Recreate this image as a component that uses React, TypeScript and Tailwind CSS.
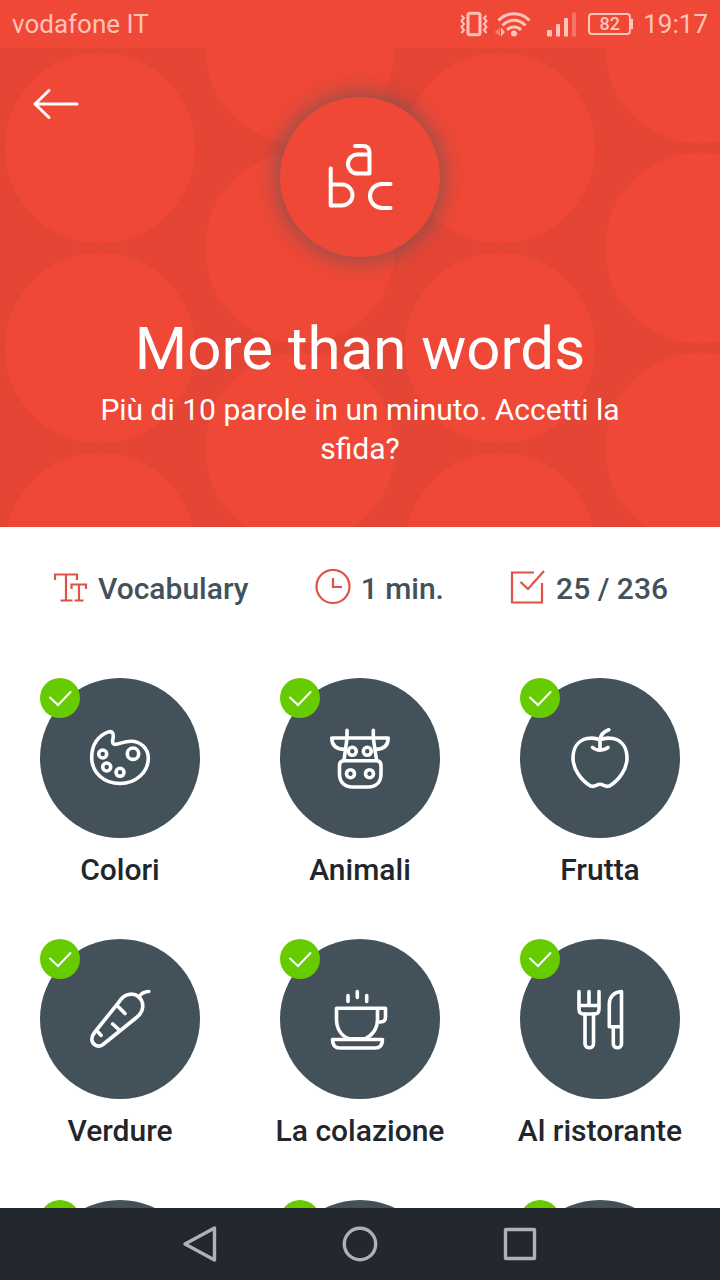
import React from "react"

export default () => {
  return (
    <div className="flex flex-col h-screen overflow-hidden bg-white font-['Roboto',sans-serif]">
      <StatusBar />
      <main className="flex flex-col grow min-h-0 overflow-hidden">
        <Hero />
        <Stats />
        <Topics />
      </main>
      <NavBar />
    </div>
  );
}

const StatusBar = () => (
  <div className="flex shrink-0 items-center justify-between h-12 px-3 bg-[#f04836] text-[#ffc3b9] text-[26px]">
    <span>vodafone IT</span>
    <div className="flex items-center">
      <svg className="w-[116px] h-12" viewBox="460 0 116 48" fill="none" stroke="currentColor">
        <rect x="468" y="13.3" width="12" height="21.4" rx="2" strokeWidth="3" />
        <path d="M461.5 15.5l2.5 2.5-2.5 3 2.5 3-2.5 3 2.5 3-2.5 3M486.5 15.5l-2.5 2.5 2.5 3-2.5 3 2.5 3-2.5 3 2.5 3" strokeWidth="2" />
        <path d="M498.5 20.5C507 11.5 521 11.5 529.5 20.5M502.5 25.5C509 18.5 519 18.5 525.5 25.5M507 29.8C511 26 517 26 521 29.8" strokeWidth="3" />
        <circle cx="514" cy="33.6" r="3" fill="currentColor" stroke="none" />
        <path d="M494.5 32l5.5-4v8z" fill="currentColor" stroke="none" opacity=".45" />
        <path d="M505 32l-4-4.5v9z" fill="currentColor" stroke="none" />
        <g fill="currentColor" stroke="none">
          <rect x="547" y="30" width="5" height="6.5" rx="1" />
          <rect x="556" y="24" width="4" height="12.5" rx="1" />
          <rect x="564" y="18" width="4" height="18.5" rx="1" />
          <rect x="572" y="12.5" width="4" height="24" opacity=".35" />
        </g>
      </svg>
      <div className="flex items-center ml-3 mr-2.5">
        <span className="flex items-center justify-center w-[43px] h-[22px] border-2 border-current rounded-[4px] text-[18px] leading-none font-medium">82</span>
        <span className="w-0.5 h-2.5 bg-current" />
      </div>
      <span>19:17</span>
    </div>
  </div>
)

const Hero = () => (
  <header className="relative shrink-0 bg-[#e54534] text-white">
    <svg className="absolute inset-0 w-full h-full" aria-hidden="true">
      <defs>
        <pattern id="dots" width="400" height="200" patternUnits="userSpaceOnUse">
          <g fill="#f04836">
            <circle cx="100" cy="100" r="95" />
            <circle cx="300" cy="0" r="95" />
            <circle cx="300" cy="200" r="95" />
          </g>
        </pattern>
      </defs>
      <rect width="100%" height="100%" fill="url(#dots)" />
    </svg>
    <button className="absolute left-8 top-10 flex" aria-label="Indietro">
      <svg className="w-12 h-8" viewBox="0 0 48 32" fill="none" stroke="currentColor" strokeWidth="3" strokeLinecap="round" strokeLinejoin="round">
        <path d="M45 16H3M17 2.5L3 16l14 13.5" />
      </svg>
    </button>
    <div className="relative flex flex-col items-center px-16 pt-[49px] pb-[59px] text-center">
      <div className="flex items-center justify-center size-40 rounded-full bg-[#f04836] shadow-[0_0_24px_1px_rgba(84,88,90,0.8)]">
        <svg className="size-[68px]" viewBox="0 0 68 68" fill="none" stroke="currentColor" strokeWidth="4" strokeLinecap="round" strokeLinejoin="round">
          <path d="M4.7 25.5v37H16a10.5 10.5 0 0 0 0-21H4.7" />
          <path d="M29 3h8q6.500 0 6.500 7v20.500H31.500a9.500 9.500 0 0 1 0-19H43" />
          <path d="M64.500 41H56a12 12 0 0 0 0 24h8.500" />
        </svg>
      </div>
      <h1 className="mt-14 text-[60px] leading-[72px]">More than words</h1>
      <p className="mt-[5px] text-[30px] leading-[39px]">Più di 10 parole in un minuto. Accetti la sfida?</p>
    </div>
  </header>
)

const Stats = () => (
  <div className="flex shrink-0 items-center justify-between px-[52px] pt-[42px] text-[30px] leading-10 font-medium text-[#43515a]">
    <Stat label="Vocabulary">
      <path d="M3 11V5.500h22V11M14 5.500v26M8.500 31.500h12M19.500 20v-4.500H34V20M27 15.500v16M22.500 31.500h9" />
    </Stat>
    <Stat label="1 min.">
      <circle cx="18" cy="17.500" r="16.500" />
      <path d="M18 9v9h9" />
    </Stat>
    <Stat label="25 / 236">
      <path d="M24 3.500H2v30h30V14M10.500 13l7.500 7L34 2" />
    </Stat>
  </div>
)

const Stat = (props) => (
  <div className="flex items-start gap-2.5">
    <svg className="size-9" viewBox="0 0 36 36" fill="none" stroke="#dd5344" strokeWidth="2.2">
      {props.children}
    </svg>
    <span>{props.label}</span>
  </div>
)

const Topics = () => (
  <div className="grid shrink-0 grid-cols-3 gap-y-[41px] mt-[69px]">
    <Topic label="Colori">
      <path d="M18.500 3.900C8 7.500 1.700 17 1.700 29C1.700 45 14 55.500 30 55.500C46 55.500 58.300 44 58.300 30C58.300 20 50 13.200 41 13.200C34 13.200 29 16.300 25.500 16.300C22 16.300 22.300 13 23 10.500C24 6 22.500 2.800 18.500 3.900z" />
      <circle cx="12.700" cy="26" r="4" />
      <circle cx="16.700" cy="39" r="4" />
      <circle cx="30" cy="44.300" r="4" />
      <circle cx="43" cy="25.700" r="5.700" />
    </Topic>
    <Topic label="Animali">
      <path d="M17 2.300v8L14 32M43.300 2.300v8L46.500 32M1.800 10H58.200C58.200 17 54 21.300 45.500 21.300M1.800 10C1.800 17 6 21.300 14.500 21.300" />
      <circle cx="22.300" cy="23.300" r="4" />
      <circle cx="37.300" cy="23.300" r="4" />
      <path d="M14 32.700H46.500Q51 32.700 51 38V46C51 54 46 59 38 59H22.500C14.500 59 9.500 54 9.500 46V38Q9.500 32.700 14 32.700z" />
      <circle cx="20.500" cy="45.700" r="4" />
      <circle cx="39.500" cy="45.700" r="4" />
    </Topic>
    <Topic label="Frutta">
      <path d="M30 11.800C25 9.500 21 9.800 17 10.600C8 12.500 3 20 3 30C3 41 11 52.500 20.500 58C25 59.500 26.500 56.300 30 56.300C33.500 56.300 35 59.500 39.500 58C49 52.500 57 41 57 30C57 20 52 12.500 43 10.600C39 9.800 35 9.500 30 11.800z" />
      <path d="M30 21.500V12C30.500 6.500 34 3.500 38.800 1.800M22.500 19.500C26.500 23 33.500 23 38 19.500" />
    </Topic>
    <Topic label="Verdure">
      <path d="M49 8C43 3 34 4.500 29 13L4.500 43.500C1 48 1 53 4.500 55.500C7 57.500 10.500 57.300 13 55.500L46.500 28.500C53.500 23 55 14 49 8z" />
      <path d="M49 8C51.500 4 54.500 2.500 58.800 2.500M28.500 18l6.500 6.500M22.700 35l5.500 5M8 43l3 3.300" />
    </Topic>
    <Topic label="La colazione">
      <path d="M18 6.500v6M27.300 2.500v6M36.700 6.500v6" />
      <path d="M6.500 19.300H55.500V28Q55.500 33 50.500 33H47.500M47.500 19.300V30C47.500 40 42 47 35 49.800H19C11.500 47 6.500 40 6.500 30V19.300" />
      <path d="M2.500 50.500H52.500C52.500 56.500 50 59 45 59H10C5 59 2.500 56.500 2.500 50.500z" />
    </Topic>
    <Topic label="Al ristorante">
      <path d="M9 2.500V20Q9 25 13.500 25H24.500Q29 25 29 20V2.500M19 2.500V16.500M9 16.500H29" />
      <path d="M15 25V55C15 60 23.500 60 23.500 55V25" />
      <path d="M51.500 2.500C44 3 39.300 8 39.300 15V37.700H51.500zM43.300 37.700V55C43.300 60 51.500 60 51.500 55V37.700" />
    </Topic>
    <Topic title="Lezione 7" />
    <Topic title="Lezione 8" />
    <Topic title="Lezione 9" />
  </div>
)

const Topic = (props) => (
  <button className="flex flex-col items-center" aria-label={props.title}>
    <span className="relative flex items-center justify-center size-40 rounded-full bg-[#43515a] text-white">
      <svg className="size-[60px] overflow-visible" viewBox="0 0 60 60" fill="none" stroke="currentColor" strokeWidth="3.6" strokeLinecap="round" strokeLinejoin="round">
        {props.children}
      </svg>
      <svg className="absolute left-0 top-0 size-10 rounded-full bg-[#66cc00]" viewBox="0 0 40 40" fill="none" stroke="currentColor" strokeWidth="2" strokeLinecap="round">
        <path d="M10 19.500l8 7.500L30.500 14" />
      </svg>
    </span>
    <span className="mt-3 h-12 text-[30px] leading-10 font-medium text-[#22262b] whitespace-nowrap">{props.label}</span>
  </button>
)

const NavBar = () => (
  <nav className="flex shrink-0 items-center justify-center gap-[120px] h-18 bg-[#23272e] text-[#b0b1b4]">
    <NavButton label="Indietro"><path d="M5 20L34.500 4V36z" /></NavButton>
    <NavButton label="Home"><circle cx="20" cy="20" r="15.700" /></NavButton>
    <NavButton label="Recenti"><rect x="5.500" y="5.500" width="29" height="29" rx="0.500" /></NavButton>
  </nav>
)

const NavButton = (props) => (
  <button className="flex" aria-label={props.label}>
    <svg className="size-10" viewBox="0 0 40 40" fill="none" stroke="currentColor" strokeWidth="3.400" strokeLinejoin="round">
      {props.children}
    </svg>
  </button>
)
